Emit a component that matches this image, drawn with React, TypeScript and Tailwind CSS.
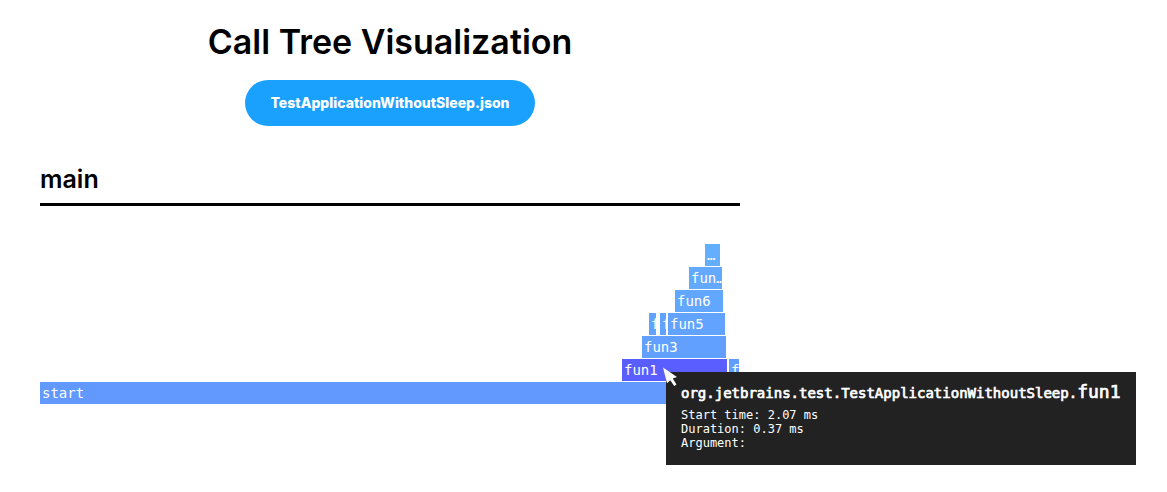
type Call = { label: string; from: number; to: number; color: string };

const TOTAL = 700;

const levels: Call[][] = [
  [{ label: "…", from: 665, to: 680, color: "#63aeff" }],
  [{ label: "fun…", from: 649, to: 682, color: "#63aaff" }],
  [{ label: "fun6", from: 635, to: 683, color: "#62a7ff" }],
  [
    { label: "f", from: 609, to: 616, color: "#62a3ff" },
    { label: "f", from: 620, to: 626, color: "#62a3ff" },
    { label: "fun5", from: 628, to: 685, color: "#62a3ff" },
  ],
  [{ label: "fun3", from: 602, to: 686, color: "#62a0ff" }],
  [
    { label: "fun1", from: 582, to: 687, color: "#5a5eff" },
    { label: "f", from: 689, to: 699, color: "#619dff" },
  ],
  [{ label: "start", from: 0, to: 700, color: "#6199ff" }],
];

const percent = (value: number) => `${(value / TOTAL) * 100}%`;

function Level({ calls }: { calls: Call[] }) {
  return (
    <div className="flex h-[22px]">
      {calls.map((call, i) => (
        <div
          key={call.from}
          className="shrink-0 overflow-hidden whitespace-nowrap pl-0.5 leading-[22px] text-white"
          style={{
            marginLeft: percent(call.from - (i > 0 ? calls[i - 1].to : 0)),
            width: percent(call.to - call.from),
            backgroundColor: call.color,
          }}
        >
          {call.label}
        </div>
      ))}
    </div>
  );
}

function Cursor() {
  return (
    <svg
      className="absolute -left-1 -top-1.5"
      width="18"
      height="22"
      viewBox="0 0 18 22"
      fill="#fff"
      aria-hidden="true"
    >
      <path d="M1 1.5 L15 11 L10.7 12.6 L14.5 18.5 L12.2 20 L8.3 14.2 L5 17.3 Z" />
    </svg>
  );
}

function Tooltip() {
  return (
    <div
      role="tooltip"
      className="absolute left-[626px] top-32 whitespace-nowrap bg-[#222] px-[15px] pb-[15px] pt-2 text-xs leading-[14px] text-white"
    >
      <Cursor />
      <div className="mb-[3px] text-sm leading-6 [-webkit-text-stroke:0.7px_white]">
        org.jetbrains.test.TestApplicationWithoutSleep.
        <span className="text-lg leading-6">fun1</span>
      </div>
      <p>Start time: 2.07 ms</p>
      <p>Duration: 0.37 ms</p>
      <p>Argument:</p>
    </div>
  );
}

export default function App() {
  return (
    <main className="min-h-screen overflow-hidden bg-white px-10 pt-5 font-['Inter',sans-serif] text-black">
      <div className="w-full max-w-[700px]">
        <header className="flex flex-col items-center gap-4">
          <h1 className="text-[34px] font-semibold leading-[44px]">Call Tree Visualization</h1>
          <button
            type="button"
            className="h-[46px] rounded-full bg-[#1aa1fd] px-[25px] text-sm font-extrabold text-white"
          >
            TestApplicationWithoutSleep.json
          </button>
        </header>
        <section className="mt-[37px]">
          <h2 className="border-b-3 border-black pb-[7px] text-[25px] font-semibold leading-[33px]">main</h2>
          <div className="relative mt-[38px] flex flex-col gap-px font-['DejaVu_Sans_Mono',monospace] text-sm">
            {levels.map((calls, i) => (
              <Level key={i} calls={calls} />
            ))}
            <Tooltip />
          </div>
        </section>
      </div>
    </main>
  );
}
